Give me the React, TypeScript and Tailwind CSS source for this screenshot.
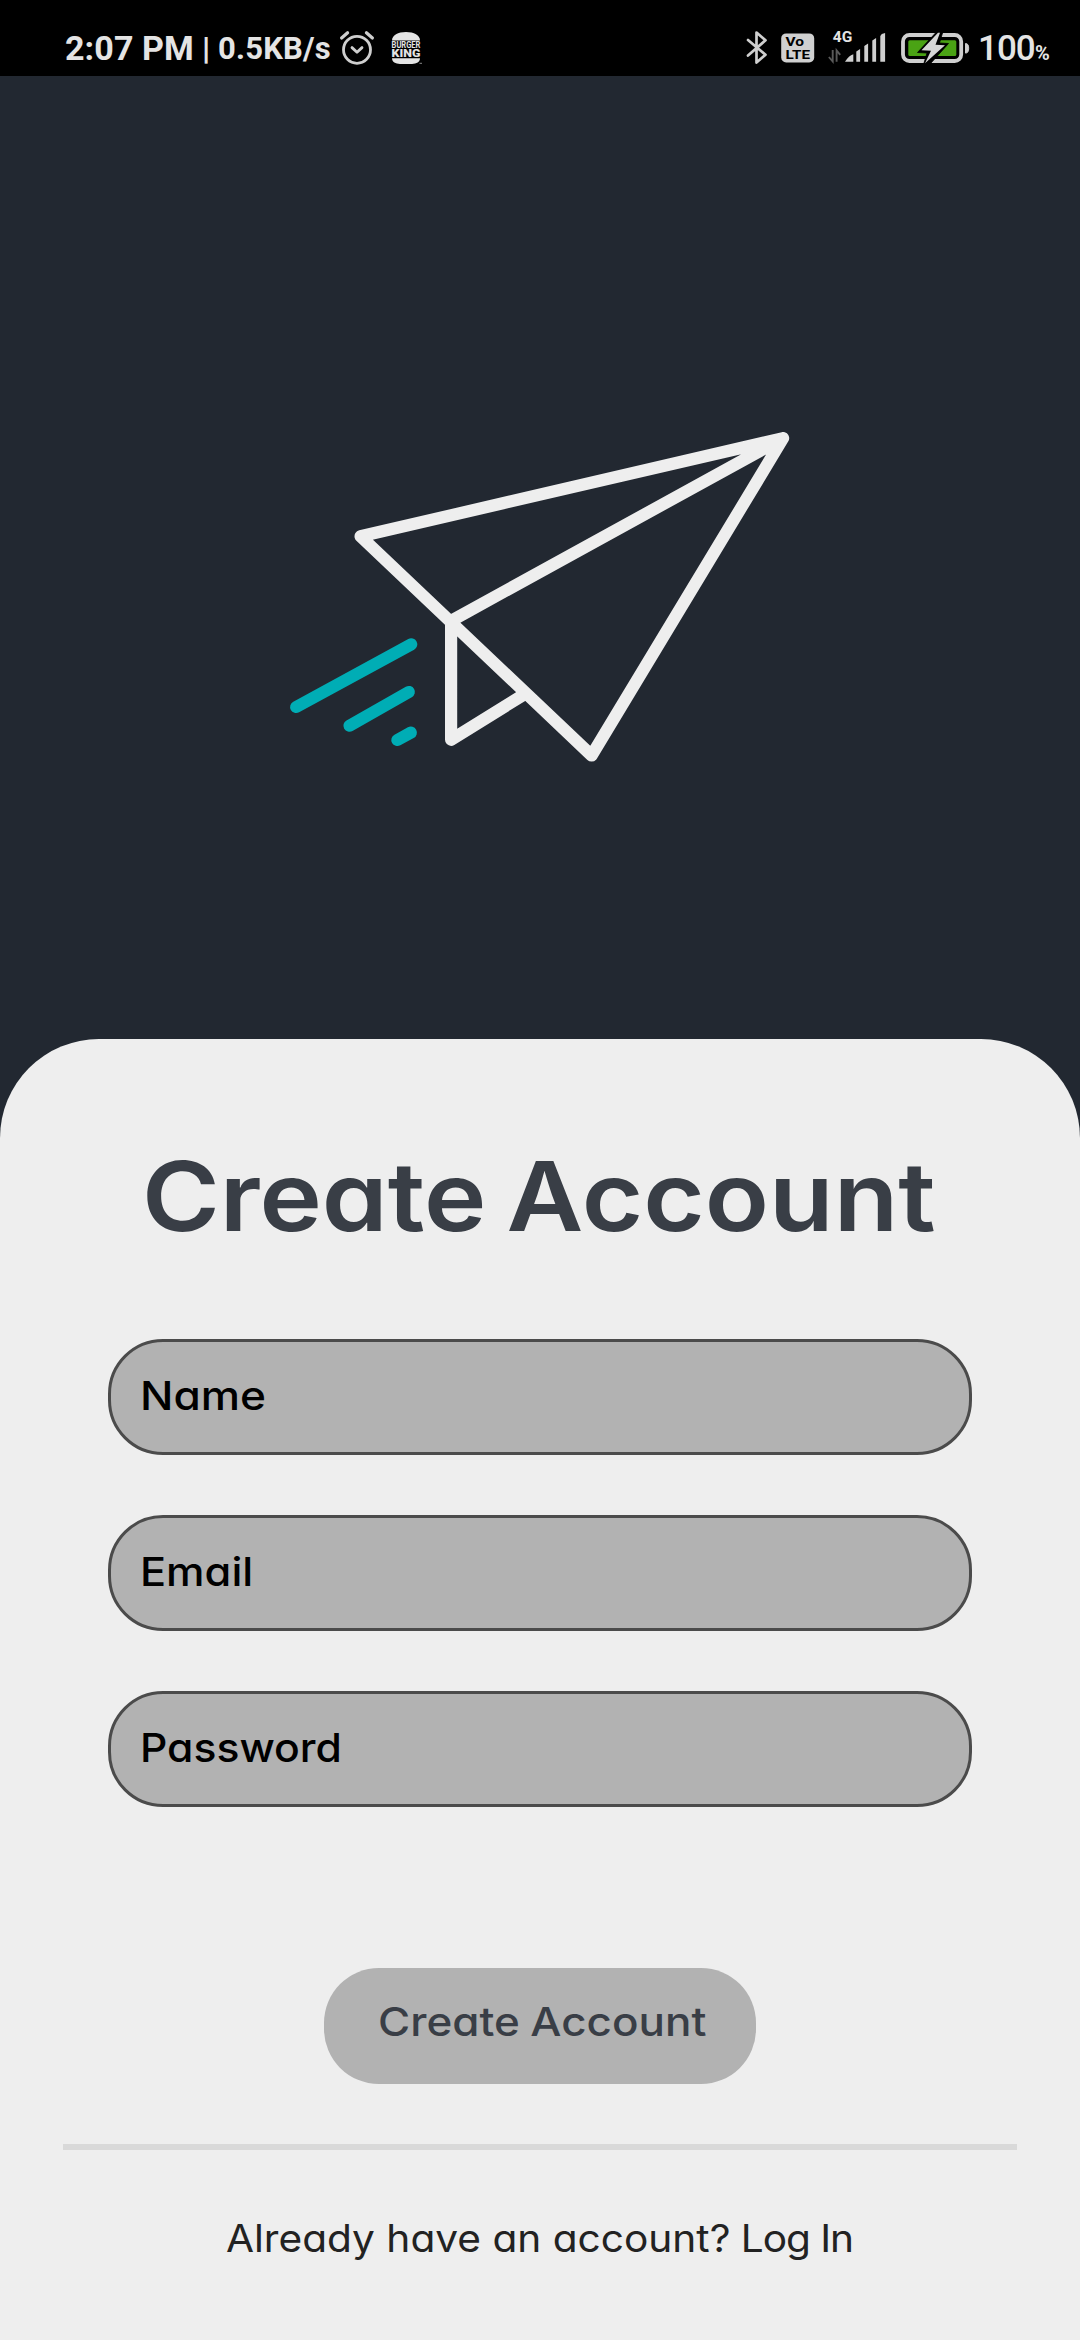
import React from "react";

function AlarmIcon() {
  return (
    <svg className="ml-[8px] h-[36px] w-[36px] shrink-0" viewBox="0 0 36 36" fill="none" stroke="#cfcfcf" strokeLinecap="round" strokeLinejoin="round">
      <circle cx="18" cy="19.8" r="13.5" strokeWidth="2.8" />
      <path d="M2.6 8 8.600 2.800M27.400 2.800l6 5.200" strokeWidth="3.200" />
      <path d="M13 17.600l5 4.600 5-4.600" strokeWidth="2.800" />
    </svg>
  );
}

function BurgerIcon() {
  return (
    <svg className="ml-[16px] h-[34px] w-[32px] shrink-0 overflow-visible" viewBox="0 0 32 34" fill="#e4e4e4">
      <path d="M1 9.400C1 4.200 7 1 15 1s14 3.200 14 8.400z" />
      <path d="M1 27.200h28c0 3.600-3.500 5.700-8 5.700H9c-4.500 0-8-2.100-8-5.700z" />
      <text x="0.600" y="17.400" fontFamily="Roboto" fontWeight="700" fontSize="8.800" textLength="28.800" lengthAdjust="spacingAndGlyphs">BURGER</text>
      <text x="0.600" y="26.200" fontFamily="Roboto" fontWeight="900" fontSize="11" textLength="28.800" lengthAdjust="spacingAndGlyphs">KING</text>
      <rect x="28.500" y="31.800" width="2.500" height="1" fill="#888" />
    </svg>
  );
}

function BluetoothIcon() {
  return (
    <svg className="mr-px h-[36px] w-[24px] shrink-0" viewBox="0 0 24 36" fill="none" stroke="#cfcfcf" strokeWidth="2.700" strokeLinejoin="round" strokeLinecap="round">
      <path d="M3 10 20.500 24.700 11.500 32.500V2.500l9 7.800L3 25.500" />
    </svg>
  );
}

function VolteIcon() {
  return (
    <svg className="ml-[11px] h-[30px] w-[34px] shrink-0" viewBox="0 0 34 30">
      <rect x="0.200" y="0.400" width="33" height="29" rx="5" fill="#d0d0d0" />
      <text x="4.500" y="13" fontFamily="Roboto" fontWeight="700" fontSize="13.500" textLength="18.500" lengthAdjust="spacingAndGlyphs">Vo</text>
      <text x="4.500" y="26.200" fontFamily="Roboto" fontWeight="700" fontSize="13.500" textLength="24.500" lengthAdjust="spacingAndGlyphs">LTE</text>
    </svg>
  );
}

function SignalIcon() {
  return (
    <svg className="ml-[13px] h-[32px] w-[58px] shrink-0 overflow-visible" viewBox="0 0 58 32">
      <text x="4.800" y="10.400" fontFamily="Roboto" fontWeight="700" fontSize="15.500" fill="#e4e4e4" textLength="19.500" lengthAdjust="spacingAndGlyphs">4G</text>
      <path d="M4.700 18V29.500L0.900 25M8.600 29.700V18.400l3.600 4.500" fill="none" stroke="#5a5a5a" strokeWidth="1.900" />
      <path d="M17 29.700c2.600-4.200 5.200-6.500 8.300-7.500v7.500z" fill="#cfcfcf" />
      <path d="M28.300 19.500l3.800-2.400v12.600h-3.800zM36.300 14l3.800-2.400v18.100h-3.800zM44.300 8.500l3.800-2.400v23.600h-3.800zM52.300 4l1.500-1.900 3.300-1v28.600h-4.800z" fill="#cfcfcf" />
    </svg>
  );
}

function BatteryIcon() {
  return (
    <svg className="ml-[15px] h-[32px] w-[69px] shrink-0 overflow-visible" viewBox="0 0 69 32">
      <rect x="2" y="3" width="58.200" height="26" rx="6.500" fill="none" stroke="#cfcfcf" strokeWidth="3.800" />
      <rect x="7.300" y="8.300" width="48" height="15.700" rx="1.500" fill="#4aa314" />
      <path d="M64.500 11.500a3.200 4.800 0 0 1 0 9.600z" fill="#cfcfcf" stroke="#cfcfcf" strokeLinejoin="round" />
      <path d="M34.500 1 16.500 20.500l9.500.500L23 31l7 0L47.500 11.500l-9-.500L41.500 1z" fill="#000" stroke="#000" strokeWidth="0.800" />
      <path d="M37 0.800 20.500 18.300l9.500.500L24 31.200 44 13.300l-9.500-.600L39 0.800z" fill="#d6d6d6" />
    </svg>
  );
}

function StatusBar() {
  return (
    <header className="flex h-[76px] shrink-0 items-center bg-black pt-[20px] pr-[30px] pl-[65px] font-['Roboto',sans-serif] leading-none whitespace-nowrap text-[#e4e4e4]">
      <span className="w-[137px] text-[34px] font-bold tracking-[0.1px]">2:07 PM</span>
      <span className="w-[16px] text-[32px] font-black">|</span>
      <span className="w-[113px] text-[31px] font-bold tracking-[0.200px]">0.5KB/s</span>
      <AlarmIcon />
      <BurgerIcon />
      <div className="ml-auto flex items-center">
        <BluetoothIcon />
        <VolteIcon />
        <SignalIcon />
        <BatteryIcon />
        <span className="ml-[8px] flex items-baseline">
          <span className="w-[57px] text-[35px] font-medium tracking-[-1px]">100</span>
          <span className="w-[15px] text-[20px] font-bold">%</span>
        </span>
      </div>
    </header>
  );
}

function PaperPlane() {
  return (
    <svg className="h-[350px] w-[520px]" viewBox="280 425 520 350" fill="none" strokeWidth="12.200" strokeLinecap="round" strokeLinejoin="round">
      <path stroke="#eeeeee" d="M783.100 438.200 360.600 536.300 591.600 755.500zL451.100 620.800V739.800L524 694.500" />
      <path stroke="#00adb5" d="M411.200 644.300 296.200 707M408.800 692 349.500 725.700M410.800 732.700 397.400 740" />
    </svg>
  );
}

function Field({ label, stretch }: { label: string; stretch: string }) {
  return (
    <label className="flex h-[116px] items-center rounded-[55px] border-3 border-[#4b4b4b] bg-[#b2b2b2] pb-[2px] pl-[29px] text-[40px] leading-none font-medium text-black">
      <span className={`origin-left ${stretch}`}>{label}</span>
    </label>
  );
}

export default function App() {
  return (
    <div className="flex h-[2340px] w-[1080px] flex-col overflow-hidden bg-[#222831] font-['Inter',sans-serif] [font-feature-settings:'cv11']">
      <StatusBar />
      <div className="flex h-[962.500px] shrink-0 pt-[349px] pl-[280px]">
        <PaperPlane />
      </div>
      <main className="flex flex-1 flex-col rounded-t-[99px] bg-[#eeeeee] pt-[97.500px]">
        <h1 className="ml-[142px] h-[120px] origin-left scale-x-[1.1] text-[96px] leading-[120px] font-semibold whitespace-nowrap text-[#393e46] [word-spacing:-6px]">Create Account</h1>
        <form className="mx-[108px] mt-[83px] flex flex-col gap-[60px]">
          <Field label="Name" stretch="scale-x-[1.105]" />
          <Field label="Email" stretch="scale-x-[1.083]" />
          <Field label="Password" stretch="scale-x-[1.066]" />
        </form>
        <button className="mt-[161px] ml-[324px] flex h-[116px] w-[432px] items-center rounded-[55px] bg-[#b2b2b2] pb-[9px] pl-[54px] text-[40px] leading-none font-medium whitespace-nowrap text-[#393e46]">
          <span className="origin-left scale-x-[1.099] [word-spacing:-1px]">Create Account</span>
        </button>
        <hr className="mx-[63px] mt-[60px] h-[6px] border-0 bg-[#d9d9d9]" />
        <p className="mt-[58px] ml-[226px] h-[60px] origin-left scale-x-[1.069] text-[38px] leading-[60px] whitespace-nowrap text-[#222222]">
          Already have an account?<span className="tracking-[-1px]"> Log In</span>
        </p>
      </main>
    </div>
  );
}
